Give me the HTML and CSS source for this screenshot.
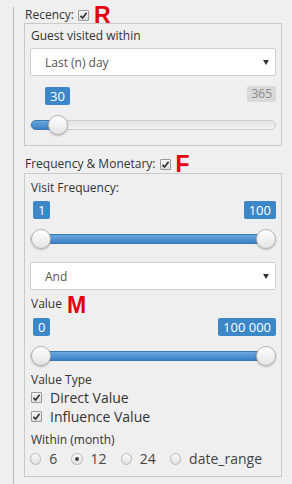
FILE: index.html
```html
<!DOCTYPE html>
<html lang="en">
<head>
    <meta charset="UTF-8">
    <meta name="viewport" content="width=device-width, initial-scale=1.0">
    <title>RFM Filter</title>
    <link rel="stylesheet" href="styles.css">
</head>
<body>
    <div class="panel">
        <div class="title">
            <span>Recency:</span>
            <span class="check"><svg width="9" height="9" viewBox="0 0 9 9"><path d="M1.5 4.8 L3.6 7 L7.6 1.8" fill="none" stroke="#333" stroke-width="1.7"/></svg></span>
            <span class="letter">R</span>
        </div>
        <div class="box box-recency">
            <div class="label">Guest visited within</div>
            <div class="select">
                <span>Last (n) day</span>
                <span class="arrow"></span>
            </div>
            <div class="slider first">
                <span class="badge" style="left:15px">30</span>
                <span class="badge limit">365</span>
                <div class="track"><div class="fill" style="left:0;width:28px"></div></div>
                <span class="handle" style="left:18px"></span>
            </div>
        </div>

        <div class="title second">
            <span>Frequency &amp; Monetary:</span>
            <span class="check"><svg width="9" height="9" viewBox="0 0 9 9"><path d="M1.5 4.8 L3.6 7 L7.6 1.8" fill="none" stroke="#333" stroke-width="1.7"/></svg></span>
            <span class="letter">F</span>
        </div>
        <div class="box box-fm">
            <div class="label">Visit Frequency:</div>
            <div class="slider">
                <span class="badge min">1</span>
                <span class="badge max">100</span>
                <div class="track"><div class="fill" style="left:11px;width:225px"></div></div>
                <span class="handle" style="left:1px"></span>
                <span class="handle" style="left:226px"></span>
            </div>
            <div class="select select-and">
                <span>And</span>
                <span class="arrow"></span>
            </div>
            <div class="label label-value">Value <span class="letter letter-m">M</span></div>
            <div class="slider">
                <span class="badge min">0</span>
                <span class="badge max">100 000</span>
                <div class="track"><div class="fill" style="left:11px;width:225px"></div></div>
                <span class="handle" style="left:1px"></span>
                <span class="handle" style="left:226px"></span>
            </div>
            <div class="label label-type">Value Type</div>
            <div class="option">
                <span class="check"><svg width="9" height="9" viewBox="0 0 9 9"><path d="M1.5 4.8 L3.6 7 L7.6 1.8" fill="none" stroke="#333" stroke-width="1.7"/></svg></span>
                <span>Direct Value</span>
            </div>
            <div class="option">
                <span class="check"><svg width="9" height="9" viewBox="0 0 9 9"><path d="M1.5 4.8 L3.6 7 L7.6 1.8" fill="none" stroke="#333" stroke-width="1.7"/></svg></span>
                <span>Influence Value</span>
            </div>
            <div class="label label-within">Within (month)</div>
            <div class="radios">
                <span class="radio"></span><span class="radio-text">6</span>
                <span class="radio checked"></span><span class="radio-text">12</span>
                <span class="radio"></span><span class="radio-text">24</span>
                <span class="radio"></span><span class="radio-text">date_range</span>
            </div>
        </div>
    </div>
</body>
</html>
```

FILE: styles.css
```css
body {
    margin: 0;
    background: #efefef;
    font-family: "Open Sans", Arial, sans-serif;
    color: #333;
    height: 484px;
    overflow: hidden;
}
.panel {
    margin-left: 13px;
    border-left: 1px solid #b8b8b8;
    padding: 0 10px;
    height: 484px;
}
.title {
    display: flex;
    align-items: center;
    height: 16px;
    margin-top: 7px;
    padding-left: 1px;
    font-size: 12px;
    line-height: 16px;
}
.title.second {
    margin-top: 10px;
}
.title .check {
    margin-left: 4px;
}
.check {
    display: inline-flex;
    align-items: center;
    justify-content: center;
    width: 9px;
    height: 9px;
    border: 1px solid #9a9a9a;
    border-radius: 1px;
    background: linear-gradient(#f6f6f6, #dcdcdc);
}
.letter {
    margin-left: 5px;
    color: #e3000f;
    font-family: "Liberation Sans", Arial, sans-serif;
    font-weight: bold;
    font-size: 23px;
    line-height: 16px;
}
.box {
    border: 1px solid #cacaca;
    padding: 4px 5px 10px;
}
.box-fm {
    margin-top: 1px;
    padding-top: 6px;
    padding-bottom: 8px;
}
.label {
    font-size: 12px;
    line-height: 16px;
    padding-left: 1px;
}
.select {
    display: flex;
    align-items: center;
    justify-content: space-between;
    height: 28px;
    margin-top: 4px;
    padding: 0 6px 0 14px;
    box-sizing: border-box;
    background: #fff;
    border: 1px solid #cfcfcf;
    border-radius: 2px;
    font-size: 12px;
    color: #555;
}
.select-and {
    margin-top: 13px;
}
.arrow {
    width: 0;
    height: 0;
    border-left: 3.5px solid transparent;
    border-right: 3.5px solid transparent;
    border-top: 5px solid #333;
}
.slider {
    position: relative;
    height: 48px;
    margin-top: 5px;
}
.slider.first {
    margin-top: 11px;
}
.badge {
    position: absolute;
    top: 0;
    height: 18px;
    line-height: 18px;
    padding: 0 5px;
    background: #3b87c8;
    color: #fff;
    font-size: 13px;
    border-radius: 2px;
}
.badge.min {
    left: 3px;
}
.badge.max {
    right: 0;
}
.badge.limit {
    top: -1px;
    right: 0;
    height: 16px;
    line-height: 16px;
    padding: 0 4px;
    background: #d9d9d9;
    color: #8a8a8a;
    font-size: 12px;
}
.track {
    position: absolute;
    left: 0;
    right: 0;
    top: 33px;
    height: 8px;
    border: 1px solid #cdcdcd;
    border-radius: 5px;
    background: linear-gradient(#e2e2e2, #f2f2f2);
}
.fill {
    position: absolute;
    top: -1px;
    bottom: -1px;
    border-radius: 5px;
    background: linear-gradient(#6aa7df, #3c80c4);
    border: 1px solid #3a78b6;
    box-sizing: border-box;
}
.handle {
    position: absolute;
    top: 28px;
    width: 20px;
    height: 20px;
    box-sizing: border-box;
    border-radius: 50%;
    border: 1px solid #b4b4b4;
    background: linear-gradient(#ffffff, #e4e4e4);
    box-shadow: 0 1px 2px rgba(0, 0, 0, 0.25);
}
.label-value {
    margin-top: 6px;
}
.letter-m {
    margin-left: 2px;
    vertical-align: -5px;
}
.label-type {
    margin-top: 6px;
}
.option {
    display: flex;
    align-items: center;
    gap: 8px;
    height: 19px;
    padding-left: 1px;
    font-size: 14px;
}
.option:first-of-type {
    margin-top: 3px;
}
.label-within {
    margin-top: 6px;
}
.radios {
    display: flex;
    align-items: center;
    height: 19px;
    margin-top: 1px;
    font-size: 14px;
    color: #444;
}
.radio {
    position: relative;
    width: 12px;
    height: 12px;
    box-sizing: border-box;
    border-radius: 50%;
    border: 1px solid #bdbdbd;
    background: linear-gradient(#fafafa, #e2e2e2);
}
.radio.checked::after {
    content: "";
    position: absolute;
    left: 3px;
    top: 3px;
    width: 4px;
    height: 4px;
    border-radius: 50%;
    background: #444;
}
.radio-text {
    margin: 0 14px 0 8px;
}
```
